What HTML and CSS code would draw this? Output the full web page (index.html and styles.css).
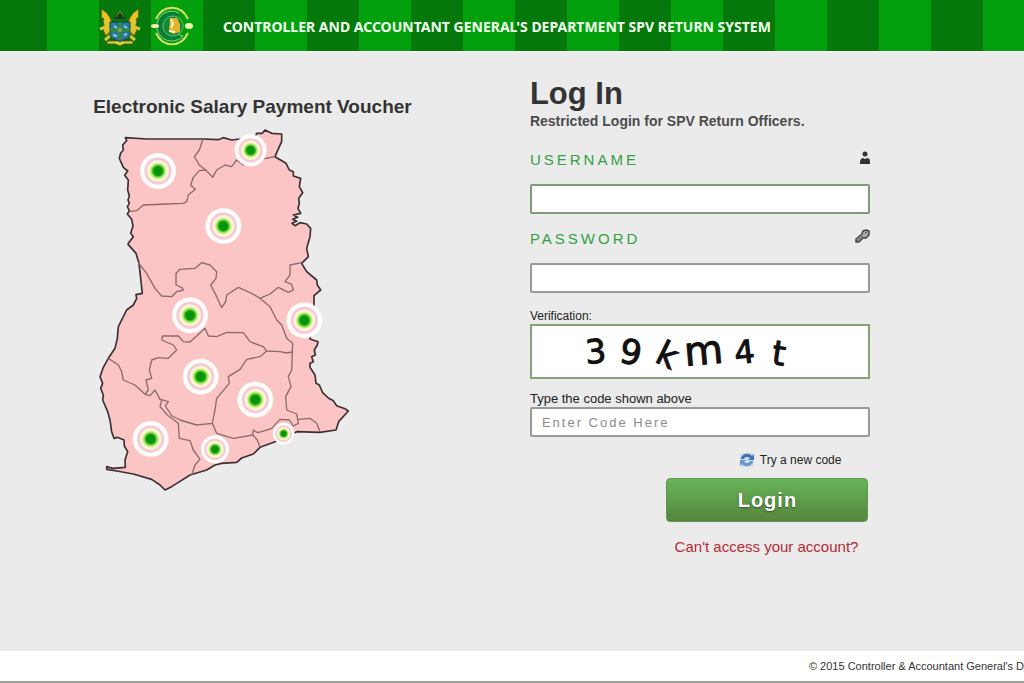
FILE: index.html
```html
<!DOCTYPE html>
<html lang="en">
<head>
<meta charset="utf-8">
<meta name="viewport" content="width=device-width, initial-scale=1">
<title>SPV Return System</title>
<link rel="stylesheet" href="styles.css">
</head>
<body>
<header class="banner">
  <div class="logos">
    <svg class="logo" viewBox="0 0 44 40" aria-hidden="true">
      <path d="M9 35h10l3-3 3 3h10v3H26l-4 2-5-2H9z" fill="#e5d335" stroke="#4d5d10"/>
      <path d="M3 3c6 3 12 9 11 20L8 30 5 24C9 21 3 16 6 13 1 11 5 8 3 3zM41 3c-6 3-12 9-11 20l6 7 3-6c-4-3 2-8-1-11 5-2 1-5 3-10z" fill="#e3c522" stroke="#675b0b"/>
      <path d="M2 23l9-3 2 9-6 5M42 23l-9-3-2 9 6 5" fill="none" stroke="#d8c63c" stroke-width="3"/>
      <path d="M12 16h20v13c0 4-6 4-10 7-4-3-10-3-10-7z" fill="#2877a0" stroke="#123f35"/>
      <path d="M22 16v18M12 24h20" stroke="#318a36" stroke-width="3"/>
      <path d="M16 20l3 2M26 20l3 2M15 29l4 1M26 29l3-1" stroke="#9fc7db" stroke-width="2"/>
      <circle cx="22" cy="24" r="2" fill="#8aa54b"/>
      <path d="M16 13h12l-2-4-4-3-4 3z" fill="#173c20"/>
      <path d="M18 11l4-6 4 6" fill="none" stroke="#8b8928"/>
    </svg>
    <svg class="logo" viewBox="0 0 44 40" aria-hidden="true">
      <path d="M6 13C13-2 31-2 38 13M6 27c7 15 25 15 32 0" fill="none" stroke="#d9dc68" stroke-width="2"/>
      <path d="M29 7A15 15 0 1 0 33 30L27 28" fill="#087f35" stroke="#8ed07a" stroke-width="1"/>
      <circle cx="23" cy="20" r="10" fill="#11883a" stroke="#68bd65"/>
      <path d="M20 12h7l3 6v8l-7 2-4-3z" fill="#dfb42c"/>
      <path d="M21 13l2 5-2 4M19 25l6 1" fill="none" stroke="#fff4bc" stroke-width="2"/>
      <ellipse cx="5" cy="20" rx="4" ry="2" fill="#f3f2b7"/>
      <ellipse cx="39" cy="20" rx="4" ry="3" fill="#f3f2b7"/>
    </svg>
  </div>
  <div class="banner-title">CONTROLLER AND ACCOUNTANT GENERAL'S DEPARTMENT SPV RETURN SYSTEM</div>
</header>

<main class="content">
  <section class="intro">
    <h2 class="intro-title">Electronic Salary Payment Voucher</h2>
    <svg class="map" viewBox="39 102 780 1110" role="img" aria-label="Map of Ghana with regional offices">
      <defs>
        <radialGradient id="pulse">
          <stop offset="0" stop-color="#078e0b"/>
          <stop offset=".24" stop-color="#0c980c"/>
          <stop offset=".34" stop-color="#8be04e"/>
          <stop offset=".45" stop-color="#f4f7b4"/>
          <stop offset=".54" stop-color="#fff4ee"/>
          <stop offset=".63" stop-color="#f0c5cf"/>
          <stop offset=".71" stop-color="#fbd3d4"/>
          <stop offset=".77" stop-color="#ffffff"/>
          <stop offset=".91" stop-color="#ffffff"/>
          <stop offset="1" stop-color="#ffffff" stop-opacity="0"/>
        </radialGradient>
      </defs>
      <path class="land" d="M136 143L140 152 128 165 130 180 122 190 118 205 130 232 143 243 134 256 145 270 143 300 148 318 144 330 148 340 142 350 148 362 142 372 155 388 159 408 152 430 160 440 146 458 144 463 155 475 168 490 177 520 182 565 187 610 168 614 170 626 160 645 140 660 115 710 112 745 105 775 85 805 70 832 60 860 68 880 62 895 70 915 68 930 83 965 90 990 95 1025 102 1045 112 1042 132 1050 133 1068 143 1085 135 1110 136 1132 98 1135 80 1130 80 1138 110 1143 160 1152 215 1168 240 1185 255 1200 275 1190 300 1174 330 1155 380 1140 405 1125 425 1120 470 1117 485 1104 520 1092 540 1072 600 1050 650 1025 720 1027 768 1020 776 995 805 963 795 956 770 947 760 932 745 924 728 908 718 885 708 880 705 855 690 832 690 820 700 815 695 800 706 795 703 780 712 765 714 755 690 747 692 733 688 723 702 704 702 650 702 617 722 600 712 585 710 570 680 545 665 520 685 500 680 475 690 440 692 415 680 402 660 398 645 407 636 400 650 394 638 388 653 382 640 375 662 370 654 355 658 340 656 325 668 308 658 290 662 265 640 258 640 245 628 240 618 220 585 200 590 188 598 170 605 155 605 132 575 130 555 120 547 130 530 130 525 145 490 153 480 147 455 150 430 143 415 149 370 147 340 147 200 147z"/>
      <g class="borders">
        <path d="M368 150L358 180 343 200 358 225 380 243 398 262 410 240 435 225 455 230 470 210 490 225 520 212 585 200"/>
        <path d="M380 240L358 242 340 262 332 285 346 298 325 315 320 335 310 340 260 342 190 345 170 362 148 365"/>
        <path d="M175 518L200 550 225 595 245 618 275 620 290 605 310 600 306 593 288 585 288 550 300 538 345 535 365 518 390 525 410 545 408 565 392 585 410 620 425 653 437 635 440 615 475 592 515 610 540 625 570 612 595 592 625 607 640 600 635 583 615 575 630 555 630 525 665 518"/>
        <path d="M540 625L570 650 590 690 605 705 620 745 638 760 635 840 625 860 633 890 617 920 620 960 650 972 655 1000 640 1008 628 990 600 988 575 1015 545 1025 532 1028 520 1020 518 1035 532 1050 540 1072M655 988L690 985 710 1000 720 1025"/>
        <path d="M85 805L115 825 125 845 130 870 165 885 195 913 205 900 198 870 215 865 208 840 215 810 235 803 265 805 290 780 280 765 245 750 248 738 295 738 310 755 330 756 350 738 375 715 385 738 410 740 440 727 490 728 510 755 550 770 560 783 600 785 620 789 636 786"/>
        <path d="M560 783L540 800 500 808 480 838 445 860 448 880 410 925 405 960 397 1000M195 913L210 917 225 900 240 928 265 935 256 948 276 978 300 990 350 1005 397 1000 410 1030 460 1045 518 1035"/>
        <path d="M246 928L240 950 262 975 295 1000 298 1045 330 1052 340 1080 360 1108 345 1125 335 1155"/>
      </g>
      <g fill="url(#pulse)">
        <circle cx="234" cy="243" r="56"/>
        <circle cx="512" cy="181" r="50"/>
        <circle cx="430" cy="408" r="56"/>
        <circle cx="330" cy="676" r="56"/>
        <circle cx="673" cy="691" r="56"/>
        <circle cx="362" cy="860" r="56"/>
        <circle cx="526" cy="929" r="56"/>
        <circle cx="212" cy="1047" r="56"/>
        <circle cx="405" cy="1078" r="44"/>
        <circle cx="611" cy="1031" r="34"/>
      </g>
    </svg>
  </section>

  <form class="login">
    <h1 class="login-title">Log In</h1>
    <p class="login-note">Restricted Login for SPV Return Officers.</p>

    <div class="label-row">
      <label class="label" for="username">USERNAME</label>
      <svg class="icon" viewBox="0 0 16 16" aria-hidden="true"><circle cx="11" cy="4" r="2.5" fill="#333"/><path d="M6 14v-2c0-3 2-4 3-4l2 1 2-1c2 0 3 1 3 4v2z" fill="#333"/></svg>
    </div>
    <input class="field field-active" id="username" type="text">

    <div class="label-row">
      <label class="label" for="password">PASSWORD</label>
      <svg class="icon" viewBox="0 0 16 16" aria-hidden="true"><path d="M9 2l3-1 3 1v4l-3 3H9l-4 4H2v-3l6-5z" fill="#aaa" stroke="#444" stroke-width="1.5" stroke-linejoin="round"/><path d="M11 4l2-1M3 12l6-5" stroke="#555"/></svg>
    </div>
    <input class="field" id="password" type="password">

    <p class="hint hint-verify">Verification:</p>
    <svg class="captcha" viewBox="0 0 336 51" role="img" aria-label="Verification code">
      <g class="captcha-text">
        <text x="53" y="37" font-size="33" transform="rotate(-4 63 25)">3</text>
        <text x="88" y="38" font-size="34" transform="rotate(10 99 26)">9</text>
        <text x="124" y="41" font-size="34" transform="rotate(26 135 32)">k</text>
        <text x="152" y="38" font-size="40" transform="rotate(-5 174 28)">m</text>
        <text x="202" y="37" font-size="32" transform="rotate(-6 214 26)">4</text>
        <text x="240" y="39" font-size="34" transform="rotate(8 246 28)">t</text>
      </g>
    </svg>

    <label class="hint hint-code" for="code">Type the code shown above</label>
    <input class="field" id="code" type="text" placeholder="Enter Code Here">

    <button class="refresh" type="button">
      <svg class="refresh-icon" viewBox="0 0 16 16" aria-hidden="true"><rect x="1" y="1" width="14" height="14" rx="3" fill="#cbdcef"/><path d="M2 7c0-5 8-7 11-3l2-2v6H9l2-2C9 4 5 5 5 7z" fill="#4672ac"/><path d="M14 9c0 5-8 7-11 3l-2 2V8h6l-2 2c2 2 6 1 6-1z" fill="#6b95c9"/></svg>
      Try a new code
    </button>
    <button class="submit" type="submit">Login</button>
    <a class="help" href="#">Can't access your account?</a>
  </form>
</main>

<footer class="footer">© 2015 Controller &amp; Accountant General's D</footer>
</body>
</html>
```
FILE: styles.css
```css
* { box-sizing: border-box; }

body {
  display: flex;
  flex-direction: column;
  min-height: 100vh;
  margin: 0;
  background: #ebebeb;
  color: #333;
  font-family: "Liberation Sans", Arial, sans-serif;
}

h1, h2, p { margin: 0; }

.banner {
  display: flex;
  align-items: center;
  min-height: 52px;
  padding-left: 98px;
  border-bottom: 1px solid #fafafa;
  background: repeating-linear-gradient(90deg, #04780b 0 52px, #02a00d 52px 104px) -5px 0 / calc(100% + 5px) 100%;
}

.logos { display: flex; gap: 8px; }

.logo { width: 44px; height: 40px; }

.banner-title {
  padding: 2px 0 0 29px;
  color: #f2fff0;
  font: bold 14px/18px "Noto Sans", Verdana, sans-serif;
}

.content {
  display: grid;
  flex: 1;
  grid-template-columns: 9fr 7fr;
  align-items: start;
  padding: 24px 15% 24px 9%;
}

.intro { padding: 18px 0 0 1px; }

.intro-title { font-size: 19px; line-height: 26px; }

.map {
  display: block;
  width: 260px;
  max-width: 100%;
  margin-top: 4px;
}

.land {
  fill: #fbc5c5;
  stroke: #3c3034;
  stroke-width: 5;
  stroke-linejoin: round;
}

.borders {
  fill: none;
  stroke: #8d6a6d;
  stroke-width: 4;
  stroke-linejoin: round;
}

.login { display: flex; flex-direction: column; }

.login-title { font-size: 31px; line-height: 36px; }

.login-note {
  margin-bottom: 20px;
  color: #4c4c4c;
  font-size: 14px;
  font-weight: bold;
  line-height: 18px;
}

.label-row {
  display: flex;
  justify-content: space-between;
  height: 20px;
  margin-bottom: 14px;
}

.label {
  color: #35a043;
  font-size: 15px;
  letter-spacing: 3px;
  line-height: 20px;
}

.icon { width: 16px; height: 16px; }

.field {
  width: 100%;
  height: 30px;
  margin: 0 0 15px;
  padding: 0 10px;
  border: 2px solid #999;
  border-radius: 2px;
  background: #fff;
  color: #333;
  font: 13px "Liberation Sans", Arial, sans-serif;
  letter-spacing: 2px;
}

.field-active { border-color: #7f9c78; }

.field::placeholder { color: #8c8c8c; opacity: 1; }

.hint { color: #222; line-height: 16px; }

.hint-verify { font-size: 12px; }

.hint-code { font-size: 13px; }

.captcha {
  width: 100%;
  height: 55px;
  margin-bottom: 12px;
  border: 2px solid #86a077;
  background: #fff;
}

.captcha-text {
  fill: #111;
  stroke: #111;
  stroke-width: 1;
  font-family: "DejaVu Sans", sans-serif;
}

.refresh {
  display: flex;
  align-self: flex-end;
  align-items: center;
  gap: 5px;
  margin: 0 29px 10px 0;
  padding: 0;
  border: 0;
  background: none;
  color: #222;
  font: 12px/16px "Liberation Sans", Arial, sans-serif;
}

.refresh-icon { width: 16px; height: 16px; }

.submit {
  align-self: flex-end;
  width: 202px;
  height: 44px;
  margin: 0 2px 16px 0;
  border: 1px solid #5b9850;
  border-radius: 4px;
  background: linear-gradient(#68b457, #56853f);
  color: #fff;
  font: bold 20px "Liberation Sans", Arial, sans-serif;
  letter-spacing: 1px;
  text-shadow: 0 1px 2px #31502a;
}

.help {
  align-self: flex-end;
  margin-right: 12px;
  color: #b52a32;
  font-size: 15px;
  line-height: 18px;
  text-decoration: none;
}

.footer {
  display: flex;
  justify-content: flex-end;
  min-height: 32px;
  padding-top: 8px;
  border-bottom: 2px solid #a0a098;
  background: #fff;
  color: #333;
  font-size: 11px;
  line-height: 14px;
  white-space: nowrap;
}
```
